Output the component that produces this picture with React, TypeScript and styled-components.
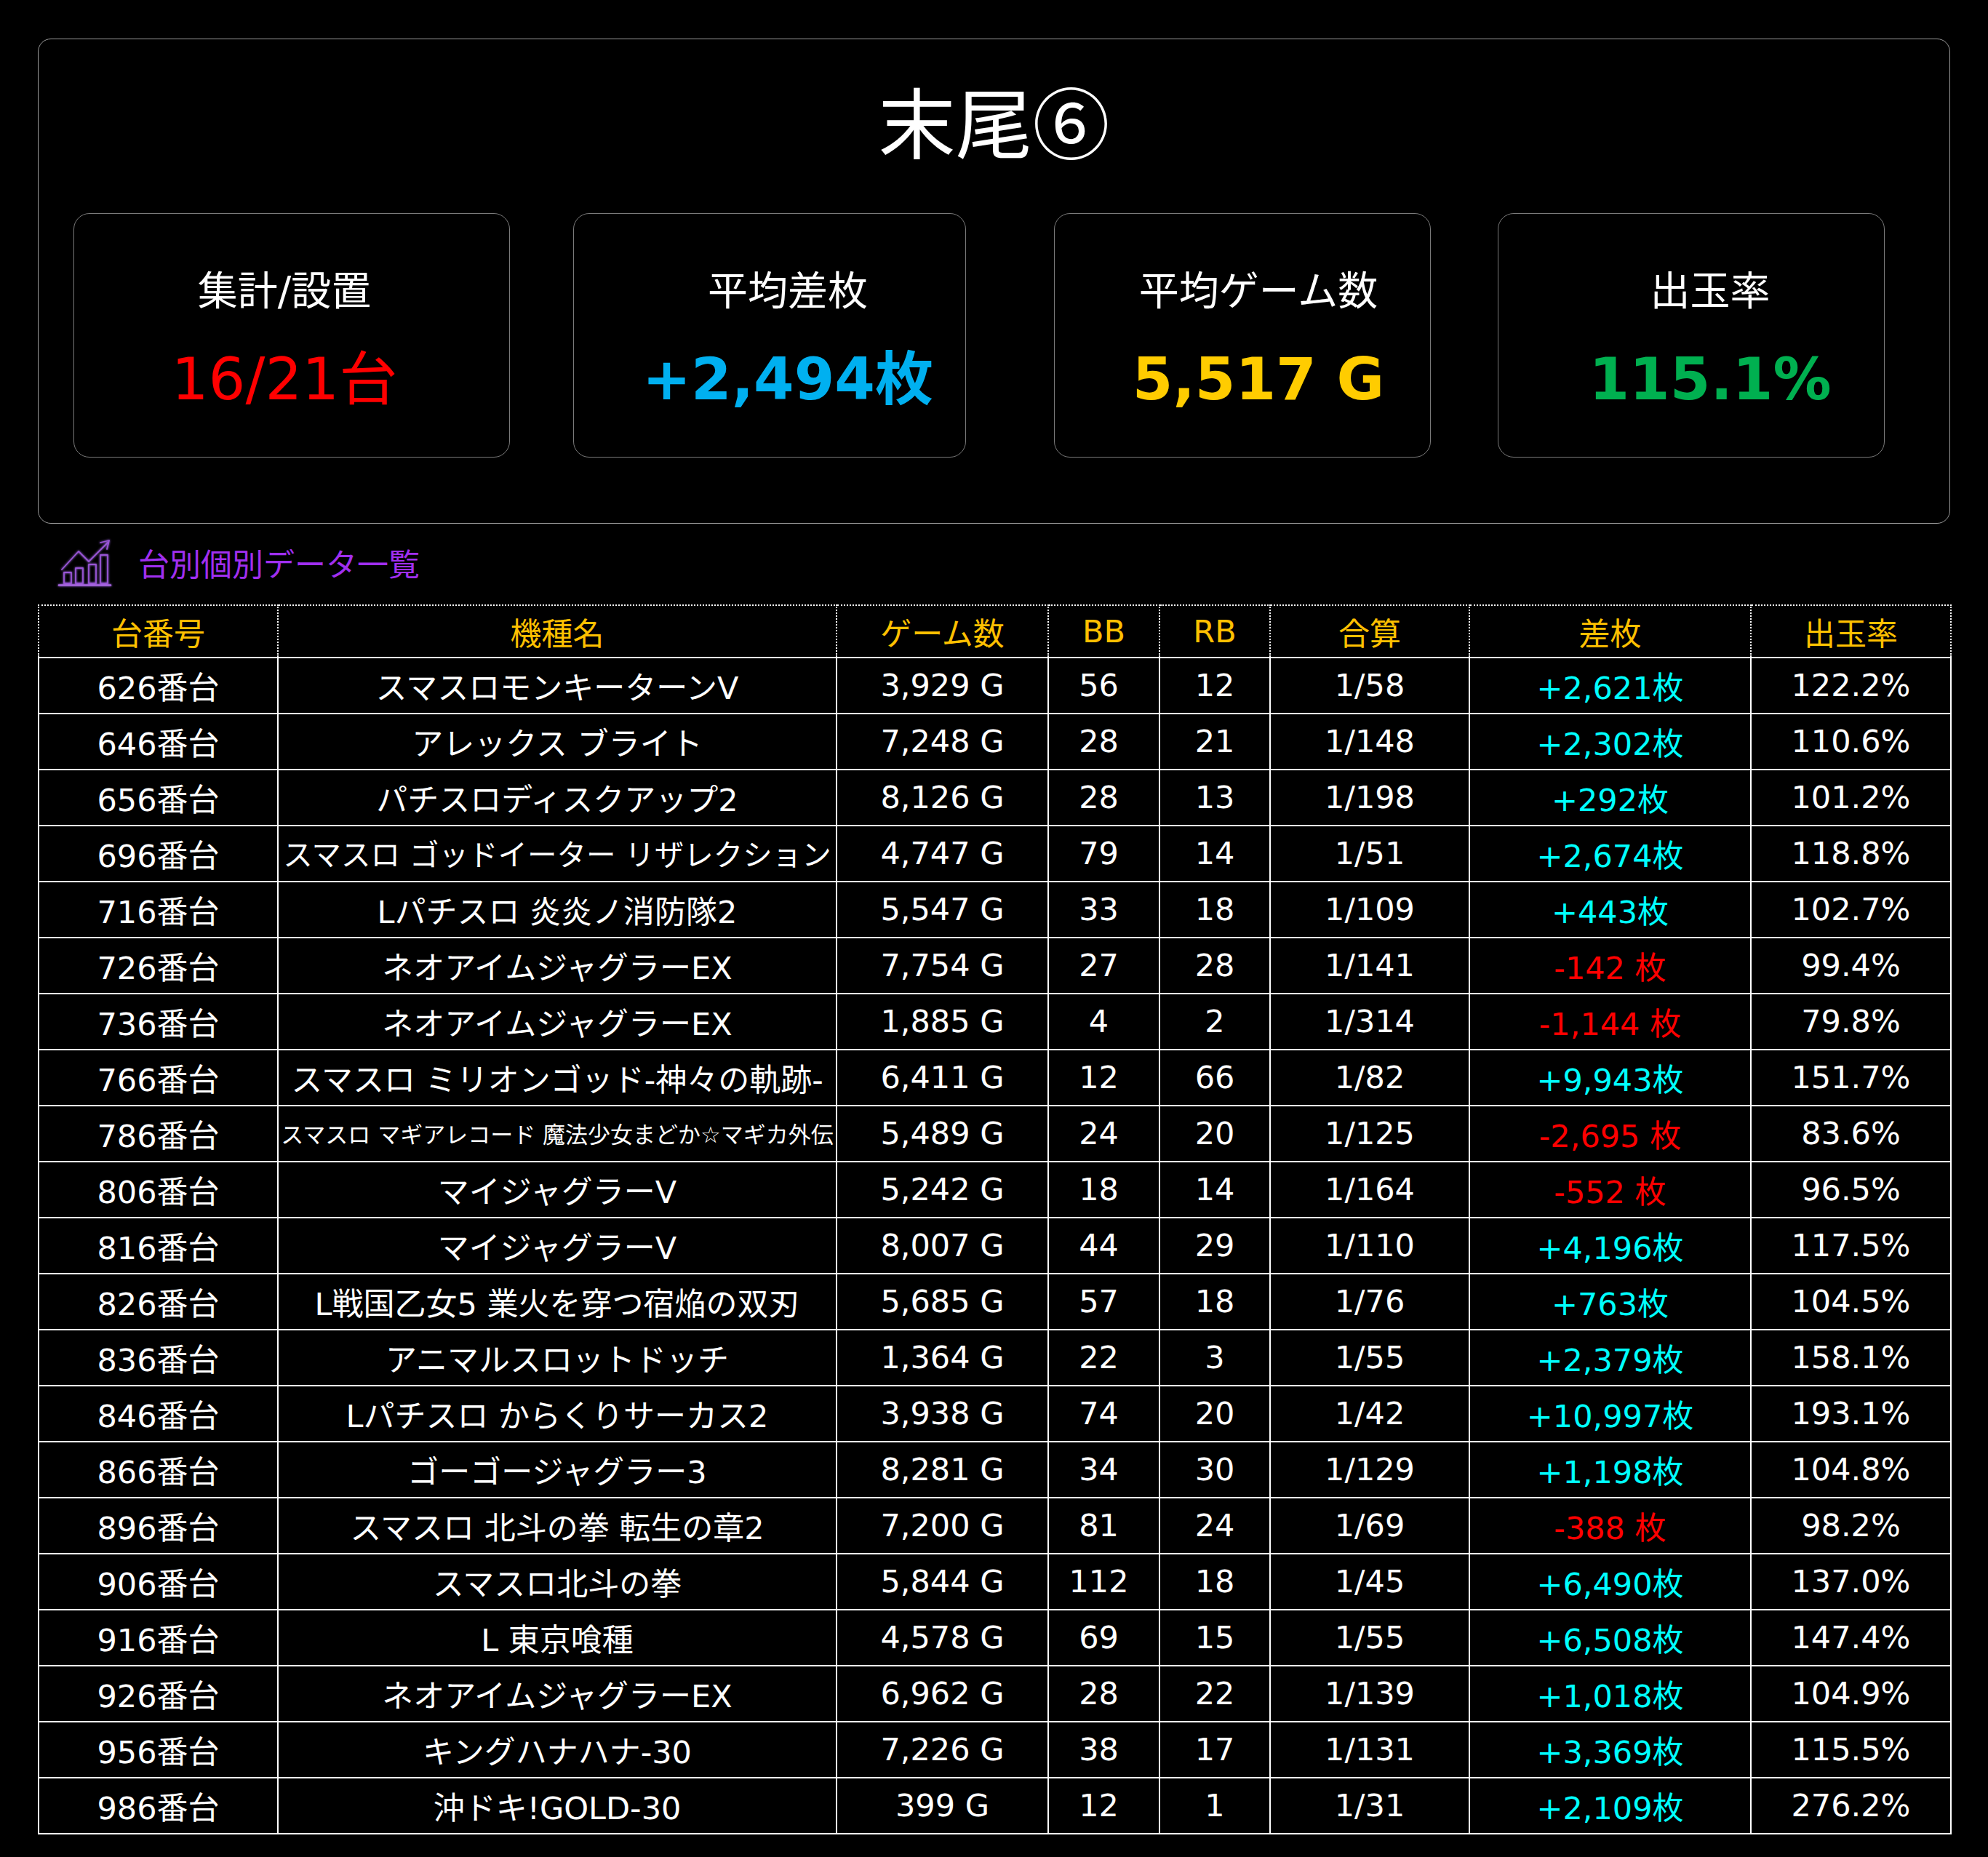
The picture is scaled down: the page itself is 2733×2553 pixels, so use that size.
import React from 'react'
import styled, { createGlobalStyle } from 'styled-components'

const GlobalStyle = createGlobalStyle`
  html, body {
    margin: 0;
    padding: 0;
    background: #000;
  }
`

const Page = styled.div`
  width: 2629px;
  padding: 53px 52px 40px;
  font-family: "DejaVu Sans", "Noto Sans CJK JP", sans-serif;
  color: #fff;
`

const Panel = styled.section`
  border: 1px solid #9a9a9a;
  border-radius: 18px;
  padding-bottom: 90px;
`

const Title = styled.h1`
  margin: 0;
  padding: 57px 0 76px;
  font-family: "Noto Sans CJK JP", "DejaVu Sans", sans-serif;
  font-size: 106px;
  line-height: 106px;
  height: 106px;
  font-weight: normal;
  text-align: center;
`

const CardRow = styled.div`
  display: flex;
  align-items: stretch;
`

const StatCard = styled.div<{ $width: number; $lead: number; $shift: number }>`
  box-sizing: border-box;
  width: ${p => p.$width}px;
  height: 336px;
  margin-left: ${p => p.$lead}px;
  border: 1.5px solid #7a7a7a;
  border-radius: 22px;
  display: flex;
  flex-direction: column;
  align-items: center;
  padding-top: 79px;
  padding-left: ${p => (p.$shift > 0 ? p.$shift * 2 : 0)}px;
  padding-right: ${p => (p.$shift < 0 ? -p.$shift * 2 : 0)}px;
`

const StatLabel = styled.div`
  font-size: 55px;
  line-height: 1;
`

const StatValue = styled.div<{ $color: string; $bold?: boolean }>`
  margin-top: 54px;
  font-size: 80px;
  line-height: 1;
  color: ${p => p.$color};
  font-weight: ${p => (p.$bold ? 'bold' : 'normal')};
  white-space: nowrap;
`

const SectionHead = styled.div`
  display: flex;
  align-items: center;
  gap: 20px;
  height: 90px;
  margin-top: 10px;
  padding-left: 18px;
`

const SectionTitle = styled.h2`
  margin: 0;
  padding-top: 5px;
  font-size: 43px;
  line-height: 1;
  font-weight: normal;
  color: #a02ff0;
`

const Table = styled.table`
  margin-top: 11px;
  width: 2629px;
  table-layout: fixed;
  border-collapse: collapse;
  font-size: 43px;
`

const HeadRow = styled.tr`
  height: 72px;
`

const Th = styled.th`
  border: 2px dotted #fff;
  padding: 0;
  font-weight: normal;
  color: #ffc000;
  text-align: center;
  vertical-align: middle;
`

const Row = styled.tr`
  height: 77px;
`

const Td = styled.td<{ $color?: string; $size?: number; $padRight?: number }>`
  border: 2px solid #fff;
  padding: 0 ${p => p.$padRight ?? 2}px 2px 2px;
  text-align: center;
  vertical-align: middle;
  white-space: nowrap;
  overflow: hidden;
  color: ${p => p.$color || '#fff'};
  font-size: ${p => (p.$size ? `${p.$size}px` : 'inherit')};
`

const ChartIcon = () => (
  <svg width="100" height="90" viewBox="0 0 100 90" style={{ filter: 'drop-shadow(0 0 1.5px #b070ff)' }}>
    <g fill="none" stroke="#9a55d6" strokeWidth="1.8" strokeLinejoin="round" strokeLinecap="round">
      <rect x="18" y="57" width="10" height="15" />
      <rect x="34" y="51" width="10" height="21" />
      <rect x="52" y="46" width="10" height="26" />
      <rect x="68" y="33" width="10" height="39" />
      <polyline points="15,53 38,28 52,42 78,16" />
      <polyline points="68,16 80,13 77,25" />
    </g>
    <line x1="11" y1="74.5" x2="82" y2="74.5" stroke="#a866e0" strokeWidth="2.6" strokeLinecap="round" />
  </svg>
)

type Stat = { label: string; value: string; color: string; bold?: boolean; width: number; lead: number; shift: number }

const stats: Stat[] = [
  { label: '集計/設置', value: '16/21台', color: '#ff0000', width: 600, lead: 48, shift: -10 },
  { label: '平均差枚', value: '+2,494枚', color: '#00b0f0', bold: true, width: 540, lead: 87, shift: 25 },
  { label: '平均ゲーム数', value: '5,517 G', color: '#ffcc00', bold: true, width: 518, lead: 121, shift: 22 },
  { label: '出玉率', value: '115.1%', color: '#00b050', bold: true, width: 532, lead: 92, shift: 26 },
]

const columns = [
  { title: '台番号', width: 329 },
  { title: '機種名', width: 768 },
  { title: 'ゲーム数', width: 291 },
  { title: 'BB', width: 153 },
  { title: 'RB', width: 152 },
  { title: '合算', width: 274 },
  { title: '差枚', width: 387 },
  { title: '出玉率', width: 275 },
]

type Machine = [string, string, string, string, string, string, string, string, number?]

const rows: Machine[] = [
  ['626番台', 'スマスロモンキーターンV', '3,929 G', '56', '12', '1/58', '+2,621枚', '122.2%'],
  ['646番台', 'アレックス ブライト', '7,248 G', '28', '21', '1/148', '+2,302枚', '110.6%'],
  ['656番台', 'パチスロディスクアップ2', '8,126 G', '28', '13', '1/198', '+292枚', '101.2%'],
  ['696番台', 'スマスロ ゴッドイーター リザレクション', '4,747 G', '79', '14', '1/51', '+2,674枚', '118.8%', 40.5],
  ['716番台', 'Lパチスロ 炎炎ノ消防隊2', '5,547 G', '33', '18', '1/109', '+443枚', '102.7%'],
  ['726番台', 'ネオアイムジャグラーEX', '7,754 G', '27', '28', '1/141', '-142 枚', '99.4%'],
  ['736番台', 'ネオアイムジャグラーEX', '1,885 G', '4', '2', '1/314', '-1,144 枚', '79.8%'],
  ['766番台', 'スマスロ ミリオンゴッド-神々の軌跡-', '6,411 G', '12', '66', '1/82', '+9,943枚', '151.7%'],
  ['786番台', 'スマスロ マギアレコード 魔法少女まどか☆マギカ外伝', '5,489 G', '24', '20', '1/125', '-2,695 枚', '83.6%', 31],
  ['806番台', 'マイジャグラーV', '5,242 G', '18', '14', '1/164', '-552 枚', '96.5%'],
  ['816番台', 'マイジャグラーV', '8,007 G', '44', '29', '1/110', '+4,196枚', '117.5%'],
  ['826番台', 'L戦国乙女5 業火を穿つ宿焔の双刃', '5,685 G', '57', '18', '1/76', '+763枚', '104.5%'],
  ['836番台', 'アニマルスロットドッチ', '1,364 G', '22', '3', '1/55', '+2,379枚', '158.1%'],
  ['846番台', 'Lパチスロ からくりサーカス2', '3,938 G', '74', '20', '1/42', '+10,997枚', '193.1%'],
  ['866番台', 'ゴーゴージャグラー3', '8,281 G', '34', '30', '1/129', '+1,198枚', '104.8%'],
  ['896番台', 'スマスロ 北斗の拳 転生の章2', '7,200 G', '81', '24', '1/69', '-388 枚', '98.2%'],
  ['906番台', 'スマスロ北斗の拳', '5,844 G', '112', '18', '1/45', '+6,490枚', '137.0%'],
  ['916番台', 'L 東京喰種', '4,578 G', '69', '15', '1/55', '+6,508枚', '147.4%'],
  ['926番台', 'ネオアイムジャグラーEX', '6,962 G', '28', '22', '1/139', '+1,018枚', '104.9%'],
  ['956番台', 'キングハナハナ-30', '7,226 G', '38', '17', '1/131', '+3,369枚', '115.5%'],
  ['986番台', '沖ドキ!GOLD-30', '399 G', '12', '1', '1/31', '+2,109枚', '276.2%'],
]

const App: React.FC = () => {
  return (
    <>
      <GlobalStyle />
      <Page>
        <Panel>
          <Title>末尾⑥</Title>
          <CardRow>
            {stats.map(s => (
              <StatCard key={s.label} $width={s.width} $lead={s.lead} $shift={s.shift}>
                <StatLabel>{s.label}</StatLabel>
                <StatValue $color={s.color} $bold={s.bold}>{s.value}</StatValue>
              </StatCard>
            ))}
          </CardRow>
        </Panel>

        <SectionHead>
          <ChartIcon />
          <SectionTitle>台別個別データ一覧</SectionTitle>
        </SectionHead>

        <Table>
          <colgroup>
            {columns.map(c => (
              <col key={c.title} style={{ width: c.width }} />
            ))}
          </colgroup>
          <thead>
            <HeadRow>
              {columns.map(c => (
                <Th key={c.title}>{c.title}</Th>
              ))}
            </HeadRow>
          </thead>
          <tbody>
            {rows.map(r => (
              <Row key={r[0]}>
                <Td>{r[0]}</Td>
                <Td $size={r[8]}>{r[1]}</Td>
                <Td>{r[2]}</Td>
                <Td $padRight={16}>{r[3]}</Td>
                <Td>{r[4]}</Td>
                <Td>{r[5]}</Td>
                <Td $color={r[6].startsWith('-') ? '#ff0000' : '#00ffff'}>{r[6]}</Td>
                <Td>{r[7]}</Td>
              </Row>
            ))}
          </tbody>
        </Table>
      </Page>
    </>
  )
}

export default App
